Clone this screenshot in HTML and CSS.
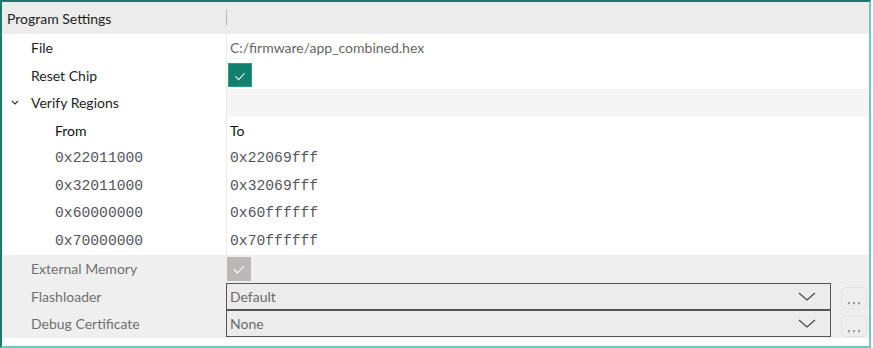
FILE: index.html
```html
<!DOCTYPE html>
<html lang="en">
<head>
  <meta charset="UTF-8">
  <title>Program Settings</title>
  <link rel="stylesheet" href="styles.css">
</head>
<body>

  <div class="panel">
    <div class="row header">
      <div class="cell name">Program Settings</div>
      <div class="cell value"><span class="divider"></span></div>
    </div>

    <div class="row">
      <div class="cell name indent">File</div>
      <div class="cell value path">C:/firmware/app_combined.hex</div>
    </div>

    <div class="row">
      <div class="cell name indent">Reset Chip</div>
      <div class="cell value">
        <span class="check on">
          <svg viewBox="0 0 24 24"><polyline points="7,12.5 10.5,16 17,9"></polyline></svg>
        </span>
      </div>
    </div>

    <div class="row group">
      <div class="cell name">
        <svg class="arrow" viewBox="0 0 8 5"><polyline points="1,1 4,4 7,1"></polyline></svg>
        Verify Regions
      </div>
      <div class="cell value shade"></div>
    </div>

    <div class="row">
      <div class="cell name sub head">From</div>
      <div class="cell value head">To</div>
    </div>
    <div class="row">
      <div class="cell name sub hex">0x22011000</div>
      <div class="cell value hex">0x22069fff</div>
    </div>
    <div class="row">
      <div class="cell name sub hex">0x32011000</div>
      <div class="cell value hex">0x32069fff</div>
    </div>
    <div class="row">
      <div class="cell name sub hex">0x60000000</div>
      <div class="cell value hex">0x60ffffff</div>
    </div>
    <div class="row">
      <div class="cell name sub hex">0x70000000</div>
      <div class="cell value hex">0x70ffffff</div>
    </div>

    <div class="row disabled">
      <div class="cell name indent">External Memory</div>
      <div class="cell value">
        <span class="check off">
          <svg viewBox="0 0 24 24"><polyline points="7,12.5 10.5,16 17,9"></polyline></svg>
        </span>
      </div>
    </div>

    <div class="row disabled">
      <div class="cell name indent">Flashloader</div>
      <div class="cell value combo-cell">
        <div class="combo">
          <span>Default</span>
          <svg viewBox="0 0 18 9"><polyline points="1,1 9,8 17,1"></polyline></svg>
        </div>
        <button class="more"><span></span><span></span><span></span></button>
      </div>
    </div>

    <div class="row disabled">
      <div class="cell name indent">Debug Certificate</div>
      <div class="cell value combo-cell">
        <div class="combo">
          <span>None</span>
          <svg viewBox="0 0 18 9"><polyline points="1,1 9,8 17,1"></polyline></svg>
        </div>
        <button class="more"><span></span><span></span><span></span></button>
      </div>
    </div>
  </div>

</body>
</html>
```

FILE: styles.css
```css
body {
  margin: 0;
  background: #fff;
  font-family: Lato, "Noto Sans", sans-serif;
  font-size: 14px;
  color: #1e1e1e;
}

.panel {
  width: 867px;
  height: 344px;
  border-top: 2px solid #1b7a6c;
  border-left: 2px solid #1b7a6c;
  border-right: 2px solid #74c6ba;
  border-bottom: 2px solid #74c6ba;
  background: #fff;
}

.row {
  display: grid;
  grid-template-columns: 224px 1fr;
  height: 27.6px;
}

.row.header {
  height: 32px;
  background: #ececec;
}

.cell {
  display: flex;
  align-items: center;
  white-space: nowrap;
}

.name {
  padding-left: 5px;
}

.name.indent {
  padding-left: 29px;
}

.name.sub {
  padding-left: 53px;
}

.value {
  padding-left: 3px;
  border-left: 1px solid #ececec;
}

.header .value {
  border-left: none;
  padding-left: 0;
}

.divider {
  width: 1px;
  height: 16px;
  background: #b9b9b9;
}

.path {
  color: #666;
}

.group .name {
  padding-left: 9px;
}

.arrow {
  width: 8px;
  height: 5px;
  margin-right: 12px;
  fill: none;
  stroke: #333;
  stroke-width: 1.2;
}

.shade {
  background: #f5f5f5;
}

.head {
  color: #111;
}

.hex {
  font-family: "Liberation Mono", monospace;
  font-size: 14.7px;
  color: #55555d;
}

.check {
  width: 24px;
  height: 24px;
  margin-left: -2px;
  display: flex;
  box-sizing: border-box;
}

.check svg {
  width: 24px;
  height: 24px;
  fill: none;
  stroke: #fff;
  stroke-width: 1.1;
}

.check.on {
  background: #11806e;
  border: 1px solid #2f9a89;
}

.check.off {
  margin-left: 1px;
  background: #bcb8b8;
}

.disabled {
  background: #efefef;
  color: #707070;
}

.disabled .value {
  border-left: none;
  padding-left: 0;
}

.combo-cell {
  gap: 10px;
}

.combo {
  width: 605px;
  height: 27px;
  box-sizing: border-box;
  border: 1.5px solid #555;
  background: #ececec;
  display: flex;
  align-items: center;
  justify-content: space-between;
  padding: 0 14px 0 3px;
  color: #6a6a6a;
}

.combo svg {
  width: 18px;
  height: 9px;
  fill: none;
  stroke: #444;
  stroke-width: 1.1;
}

.more {
  width: 26px;
  height: 22px;
  margin-top: 4px;
  border: 1px solid #e2e2e2;
  border-radius: 5px;
  background: #eeeeee;
  display: flex;
  align-items: flex-end;
  justify-content: center;
  gap: 3px;
  padding: 0 0 4px;
  cursor: pointer;
}

.more span {
  width: 2px;
  height: 2px;
  background: #9a9a9a;
  box-shadow: 0 2px 0 -0.5px #b0b0b0;
}
```
